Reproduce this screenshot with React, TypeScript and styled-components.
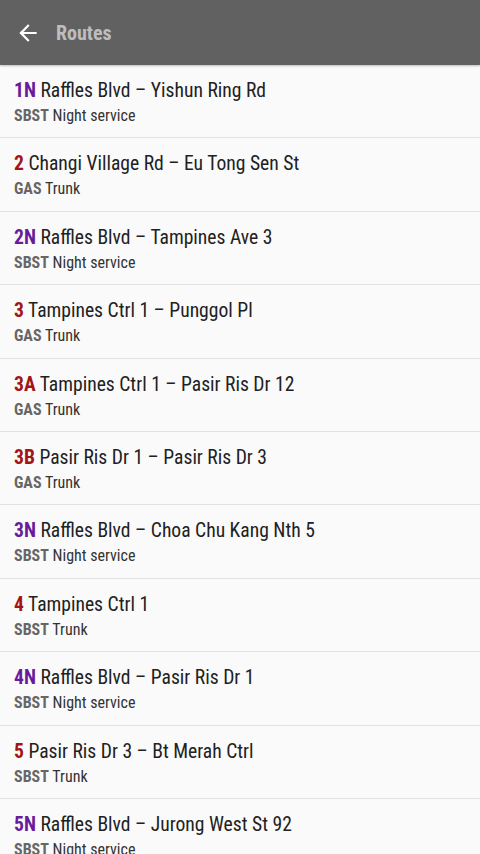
import React from "react";
import styled, { createGlobalStyle } from "styled-components";

const Global = createGlobalStyle`
  html, body { margin: 0; padding: 0; background: #fafafa; }
  body { font-family: "Roboto Condensed", "Liberation Sans Narrow", Roboto, sans-serif; }
  * { box-sizing: border-box; }
`;

type Route = { no: string; name: string; op: string; kind: string };

const routes: Route[] = [
  { no: "1N", name: "Raffles Blvd – Yishun Ring Rd", op: "SBST", kind: "Night service" },
  { no: "2", name: "Changi Village Rd – Eu Tong Sen St", op: "GAS", kind: "Trunk" },
  { no: "2N", name: "Raffles Blvd – Tampines Ave 3", op: "SBST", kind: "Night service" },
  { no: "3", name: "Tampines Ctrl 1 – Punggol Pl", op: "GAS", kind: "Trunk" },
  { no: "3A", name: "Tampines Ctrl 1 – Pasir Ris Dr 12", op: "GAS", kind: "Trunk" },
  { no: "3B", name: "Pasir Ris Dr 1 – Pasir Ris Dr 3", op: "GAS", kind: "Trunk" },
  { no: "3N", name: "Raffles Blvd – Choa Chu Kang Nth 5", op: "SBST", kind: "Night service" },
  { no: "4", name: "Tampines Ctrl 1", op: "SBST", kind: "Trunk" },
  { no: "4N", name: "Raffles Blvd – Pasir Ris Dr 1", op: "SBST", kind: "Night service" },
  { no: "5", name: "Pasir Ris Dr 3 – Bt Merah Ctrl", op: "SBST", kind: "Trunk" },
  { no: "5N", name: "Raffles Blvd – Jurong West St 92", op: "SBST", kind: "Night service" },
];

const Page = styled.div`
  width: 480px;
  height: 854px;
  overflow: hidden;
  background: #fafafa;
`;

const AppBar = styled.header`
  height: 65px;
  background: #616161;
  display: flex;
  align-items: center;
  padding-left: 15px;
  gap: 15px;
  box-shadow: 0 1px 2px rgba(0, 0, 0, 0.25);
  position: relative;
`;

const Title = styled.h1`
  margin: 0;
  font-size: 20px;
  font-weight: 700;
  color: #bdbdbd;
`;

const List = styled.ul`
  list-style: none;
  margin: 0;
  padding: 0;
`;

const Row = styled.li`
  height: 73.4px;
  padding: 14px 14px 0;
  border-bottom: 1px solid #e2e2e2;
  display: flex;
  flex-direction: column;
  gap: 3px;
`;

const Name = styled.div`
  font-size: 19.6px;
  line-height: 24px;
  color: #212121;
  white-space: nowrap;
`;

const Num = styled.span<{ $night: boolean }>`
  font-weight: 700;
  color: ${(p) => (p.$night ? "#6a1b9a" : "#a31515")};
`;

const Sub = styled.div`
  font-size: 16px;
  line-height: 20px;
  color: #333;
`;

const Op = styled.span`
  font-weight: 700;
  color: #666;
`;

export default function App() {
  return (
    <Page>
      <Global />
      <AppBar>
        <svg width="26" height="26" viewBox="0 0 24 24">
          <path d="M20 11H7.83l5.59-5.59L12 4l-8 8 8 8 1.41-1.41L7.83 13H20v-2z" fill="#fff" />
        </svg>
        <Title>Routes</Title>
      </AppBar>
      <List>
        {routes.map((r) => (
          <Row key={r.no}>
            <Name>
              <Num $night={r.no.endsWith("N")}>{r.no}</Num> {r.name}
            </Name>
            <Sub>
              <Op>{r.op}</Op> {r.kind}
            </Sub>
          </Row>
        ))}
      </List>
    </Page>
  );
}
